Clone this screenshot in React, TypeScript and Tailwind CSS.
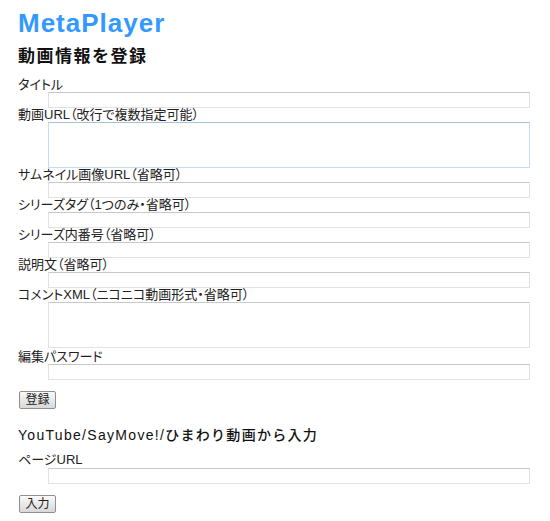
const field =
  'block ml-[30px] w-[482px] h-[16px] border border-[#e2e2e2] border-t-[#c8c8c8] bg-white outline-none'
const area =
  'block ml-[30px] w-[482px] h-[46px] border border-[#e2e2e2] border-t-[#c8c8c8] bg-white outline-none resize-none'
const label = "block text-[13px] leading-[14px] text-[#222] whitespace-nowrap [font-feature-settings:'palt']"
const button =
  "w-[37px] h-[18px] text-[12px] leading-[14px] text-[#222] border border-[#8f8f8f] rounded-[2px] bg-gradient-to-b from-[#fafafa] to-[#d8d8d8] [font-feature-settings:'palt']"

function Row({ text, multi, focused }: { text: string; multi?: boolean; focused?: boolean }) {
  return (
    <div>
      <label className={label}>{text}</label>
      {multi ? (
        <textarea
          className={
            focused
              ? 'block ml-[30px] w-[482px] h-[46px] border border-[#c6dcef] border-t-[#a6c4de] bg-white outline-none resize-none'
              : area
          }
        />
      ) : (
        <input type="text" className={field} />
      )}
    </div>
  )
}

export default function App() {
  return (
    <div
      className="min-h-[521px] bg-white pl-[18px] pt-[8px]"
      style={{ fontFamily: '"Liberation Sans", "Noto Sans CJK JP", sans-serif' }}
    >
      <h1 className="text-[26px] leading-[30px] font-bold tracking-[1px] text-[#3399ff]">MetaPlayer</h1>

      <h2 className="mt-[9px] text-[17px] leading-[20px] font-bold tracking-[1.5px] text-[#111]">
        動画情報を登録
      </h2>

      <form className="mt-[11px]" onSubmit={(e) => e.preventDefault()}>
        <Row text="タイトル" />
        <Row text="動画URL（改行で複数指定可能）" multi focused />
        <Row text="サムネイル画像URL（省略可）" />
        <Row text="シリーズタグ（1つのみ・省略可）" />
        <Row text="シリーズ内番号（省略可）" />
        <Row text="説明文（省略可）" />
        <Row text="コメントXML（ニコニコ動画形式・省略可）" multi />
        <div className="mt-[2px]">
          <Row text="編集パスワード" />
        </div>
        <button type="submit" className={`${button} mt-[11px] ml-[1px]`}>
          登録
        </button>
      </form>

      <h2 className="mt-[14px] text-[14px] leading-[20px] font-medium tracking-[1.3px] text-[#111]">
        YouTube/SayMove!/ひまわり動画から入力
      </h2>

      <form className="mt-[8px]" onSubmit={(e) => e.preventDefault()}>
        <label className={label}>ページURL</label>
        <input type="text" className={`${field} mt-[1px]`} />
        <button type="submit" className={`${button} mt-[11px] ml-[1px]`}>
          入力
        </button>
      </form>
    </div>
  )
}
